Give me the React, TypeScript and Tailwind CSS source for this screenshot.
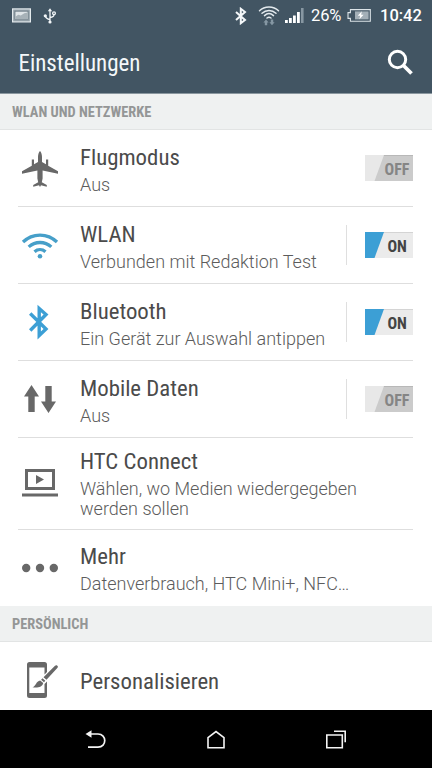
import type { ReactNode } from 'react';

type RowProps = {
  icon: ReactNode;
  title: string;
  lines?: string[];
  toggle?: 'on' | 'off';
  separated?: boolean;
  className?: string;
  textClassName?: string;
};

const condensed = "font-['Roboto_Condensed',Roboto,sans-serif] font-stretch-75%";

function StatusBar() {
  return (
    <div className="flex h-[31px] shrink-0 items-center text-white">
      <svg className="ml-3 h-[15px] w-[19px]" viewBox="0 0 19 15">
        <rect x="0.6" y="0.9" width="17.8" height="13" fill="#93a0a8" stroke="#e4eaed" strokeWidth="1.2" />
        <rect x="3" y="3.2" width="13" height="8.4" fill="#dfe5e8" stroke="#62727c" strokeWidth="0.7" />
        <path d="M3.3 11.3V8.8l3-2 2.5.8 3.5-2.4 3.4-.8v6.9z" fill="#a7b2b8" />
      </svg>
      <svg className="ml-3 h-4 w-[14px]" viewBox="0 0 14 16" fill="none" stroke="#f2f6f8" strokeWidth="1.3">
        <path d="M7 2.5V14M2.5 8.2c.3 2.4 1.5 2.9 4.5 3.3M11 6.6c0 2-1 2.7-4 3" />
        <path d="M4.8 3.2 7 .2l2.2 3z" fill="#f2f6f8" stroke="none" />
        <circle cx="2.3" cy="7.8" r="1.6" fill="#f2f6f8" stroke="none" />
        <circle cx="11" cy="5.2" r="1.4" />
        <circle cx="7" cy="14" r="1.6" fill="#f2f6f8" stroke="none" />
      </svg>
      <svg className="ml-[178px] h-[18px] w-[12px]" viewBox="0 0 12 18" fill="none" stroke="#f5f8fa" strokeWidth="2">
        <path d="M1 5l9 8-4.200 3.200V1.800L10 5l-9 8" />
      </svg>
      <svg className="ml-[11px] h-5 w-[22px]" viewBox="0 0 22 20" fill="none" stroke="#e3eaee" strokeWidth="1.5" strokeLinecap="round">
        <path d="M1.500 4.700c5-5 14-5 19 0M4 7.200c4-3.700 10-3.700 14 0M6.500 9.600c2.800-2.500 6.200-2.500 9 0M9 12c1.300-.9 2.700-.9 4 0" />
        <path d="m8 13.600 2.600 2.900H9.200v2.700H6.800v-2.700H5.400zM14 19.200l-2.600-2.900h1.400v-2.700h2.400v2.700h1.400z" fill="#8597a3" stroke="none" />
      </svg>
      <svg className="ml-[5px] h-[15px] w-[19px]" viewBox="0 0 19 15" fill="#ffffff">
        <path d="M0 12h2.800v3H0zM4 10h2.800v5H4zM8 7.500h2.800V15H8zM12 4h2.800v11H12z" />
        <path d="M16 0h2.600v15H16z" fill="#8797a2" />
      </svg>
      <span className="ml-[7px] w-[31px] whitespace-nowrap font-[Roboto,sans-serif] text-[16.5px] leading-5 tracking-[-0.1px]">26%</span>
      <svg className="ml-[5px] h-[13px] w-[24px]" viewBox="0 0 24 13">
        <path d="M3.400.6h19.900v11.600H3.400V9.400H1V3.600h2.400z" fill="none" stroke="#dce4e8" strokeWidth="1.1" />
        <path d="M8 2.400h13.600v8H8z" fill="#a3afb7" />
        <path d="M14.800 2.300 10.800 6.800h2.400l-.8 3.500 4.200-4.500h-2.400z" fill="#fff" />
      </svg>
      <span className="ml-[9px] whitespace-nowrap font-[Roboto,sans-serif] text-[16.5px] font-medium leading-5">10:42</span>
    </div>
  );
}

function SectionHeader({ label }: { label: string }) {
  return (
    <div className="flex h-9 shrink-0 items-center border-b border-[#e2e4e4] bg-[#eff1f1] pl-3 pt-[3px]">
      <h2 className={`${condensed} whitespace-nowrap text-[14.4px] font-bold leading-5 text-[#949696]`}>{label}</h2>
    </div>
  );
}

function Toggle({ state }: { state: 'on' | 'off' }) {
  const on = state === 'on';
  return (
    <div className={`relative flex h-[26px] w-12 items-center justify-end border-t ${on ? 'border-[#d4d4d4] bg-[#ebebeb] pr-[6.5px]' : 'border-[#b8b8b8] bg-[#cbcbcb] pr-1'}`}>
      <svg className="absolute -top-px left-0 h-[26px] w-5" viewBox="0 0 20 26">
        <path d="M0 0h19L9.500 26H0z" fill={on ? '#3c9fd5' : '#e8e8e8'} />
      </svg>
      <span className={`${condensed} relative pt-0.5 text-[16px] font-bold leading-5 ${on ? 'text-[#444444]' : 'text-[#858585]'}`}>{on ? 'ON' : 'OFF'}</span>
    </div>
  );
}

function SettingsRow({ icon, title, lines = [], toggle, separated, className = 'h-[77px] border-b border-[#dedede]', textClassName = 'pt-[14px]' }: RowProps) {
  return (
    <div className={`ml-[18px] mr-[18.6px] flex shrink-0 ${className}`}>
      <div className="flex w-[62px] shrink-0 items-center">{icon}</div>
      <div className={`min-w-0 flex-1 whitespace-nowrap ${textClassName}`}>
        <h3 className={`${condensed} mb-[3px] text-[22.8px] leading-7 text-[#4b4b4b]`}>{title}</h3>
        {lines.map((line) => (
          <p key={line} className="font-[Roboto,sans-serif] text-[18px] font-light leading-5 text-[#5c5c5c]">{line}</p>
        ))}
      </div>
      {toggle && (
        <div className="flex items-center">
          {separated && <div className="mr-[18px] h-10 w-px bg-[#dfdfdf]" />}
          <Toggle state={toggle} />
        </div>
      )}
    </div>
  );
}

const airplane = (
  <svg className="mt-px ml-[3px] h-[38px] w-[38px]" viewBox="0 0 38 38" fill="#686868">
    <path d="M19 1c1.200 1.200 2 3.400 2 6v5l4 2.300V9.500h2.200v6.300l9.800 5.400v2.500L21.600 20.500v8l-.8 3.800 5 2.800v1.700L20 35.200 19 37l-1-1.800-5.800 1.600v-1.700l5-2.800-.8-3.800v-8L1 23.700v-2.500l9.800-5.400V9.500H13v4.800l4-2.300V7c0-2.600.8-4.800 2-6z" />
  </svg>
);

const wifi = (
  <svg className="ml-[3px] h-[28px] w-[38px]" viewBox="0 0 38 28" fill="none" stroke="#469fc9" strokeWidth="3.3">
    <path d="M2 11c9.500-9.300 24.500-9.300 34 0M7.700 15.900c6.500-5.900 16.100-5.900 22.600 0M13.500 20.700c3.200-2.700 7.800-2.700 11 0" />
    <circle cx="19" cy="25.300" r="2.300" fill="#469fc9" stroke="none" />
  </svg>
);

const bluetooth = (
  <svg className="ml-[11px] h-[36px] w-[20px]" viewBox="0 0 20 36" fill="none" stroke="#3c9fd5" strokeWidth="3.4">
    <path d="M1.200 9.500 17 25l-6.800 6.500V4.500L17 10.500 1.200 26.500" />
  </svg>
);

const arrows = (
  <svg className="ml-[6px] h-[30px] w-[33px]" viewBox="0 0 33 30" fill="#686868">
    <path d="M7.500 1 15 12.500h-4.300V28H4.300V12.500H0zM21.300 2h6.400v15.500H32L24.500 29 17 17.500h4.300z" />
  </svg>
);

const laptop = (
  <svg className="mb-[2px] ml-1 h-[28px] w-[36px]" viewBox="0 0 36 28" fill="#686868">
    <path d="M3 0h30v21H3zM6 3v15h24V3z" fillRule="evenodd" />
    <path d="M14 6v9l8-4.500zM0 24.500h36v3H0z" />
  </svg>
);

const dots = (
  <svg className="mb-px ml-1 h-[10px] w-[36px]" viewBox="0 0 36 10" fill="#686868">
    <circle cx="4.200" cy="5" r="4.200" />
    <circle cx="18" cy="5" r="4.200" />
    <circle cx="31.800" cy="5" r="4.200" />
  </svg>
);

const personalize = (
  <svg className="mt-2 ml-[9px] h-[37px] w-[32px]" viewBox="0 0 32 37" fill="#686868">
    <path d="M2.500 0h15A2.500 2.500 0 0 1 20 2.500V10l-2.500 2.500V5.500H2.300v25.500H17.500V22l2.500-2.500v14a2.500 2.500 0 0 1-2.500 2.500h-15A2.500 2.500 0 0 1 0 33.500v-31A2.500 2.500 0 0 1 2.500 0z" />
    <path d="M29.800 3.200c1.300.8 1.500 1.800.5 2.900L19.500 17.800l-3-2.600L28 3.800c.6-.6 1.200-.8 1.800-.6zM15.500 16.300l2.800 2.500-1.300 1.400-2.900-2.400zM13.200 18.400l3 2.600c-.5 3.800-5.500 5.300-10.700 4.300 3.700-1.400 3.400-6.200 7.700-6.900z" />
  </svg>
);

function NavBar() {
  return (
    <div className="flex h-[58px] shrink-0 items-center bg-black px-9 pt-px">
      <div className="flex flex-1 justify-center">
        <svg className="h-5 w-[22px]" viewBox="0 0 22 20" fill="none" stroke="#f4f4f4" strokeWidth="1.7">
          <path d="M4.500 4H13c9 0 9 13.200 0 13.200H3" />
          <path d="M.5 4l6-3.700v7.400z" fill="#f4f4f4" stroke="none" />
        </svg>
      </div>
      <div className="flex flex-1 justify-center">
        <svg className="h-5 w-5" viewBox="0 0 20 20" fill="none" stroke="#f4f4f4" strokeWidth="1.6">
          <path d="M2 17.700V7.700L10 1.500l8 6.200v10z" />
        </svg>
      </div>
      <div className="flex flex-1 justify-center">
        <svg className="h-5 w-[22px]" viewBox="0 0 22 20" fill="none" stroke="#f4f4f4" strokeWidth="1.6">
          <path d="M1.800 5h15.500v12.700H1.800zM9 1.300h11.200v11" />
        </svg>
      </div>
    </div>
  );
}

export default function App() {
  return (
    <div className="flex h-[768px] w-[432px] flex-col overflow-hidden bg-white">
      <header className="flex h-[94px] shrink-0 flex-col border-b border-[#8a979f] bg-[#425563]">
        <StatusBar />
        <div className="flex flex-1 items-center justify-between pl-[18.5px] pr-[19px] pt-[3px]">
          <h1 className={`${condensed} text-[23px] leading-8 text-[#f4f8fa]`}>Einstellungen</h1>
          <svg className="mb-1 h-[26px] w-[26px]" viewBox="0 0 26 26" fill="none" stroke="#ffffff">
            <circle cx="10.500" cy="10.500" r="8.200" strokeWidth="3" />
            <path d="m16.500 16.500 8 8" strokeWidth="3.8" />
          </svg>
        </div>
      </header>

      <SectionHeader label="WLAN UND NETZWERKE" />
      <main className="flex flex-1 flex-col overflow-hidden">
        <SettingsRow icon={airplane} title="Flugmodus" lines={['Aus']} toggle="off" />
        <SettingsRow icon={wifi} title="WLAN" lines={['Verbunden mit Redaktion Test']} toggle="on" separated />
        <SettingsRow icon={bluetooth} title="Bluetooth" lines={['Ein Gerät zur Auswahl antippen']} toggle="on" separated />
        <SettingsRow icon={arrows} title="Mobile Daten" lines={['Aus']} toggle="off" separated />
        <SettingsRow
          icon={laptop}
          title="HTC Connect"
          lines={['Wählen, wo Medien wiedergegeben', 'werden sollen']}
          className="h-[92px] border-b border-[#dedede]"
          textClassName="pt-[10px]"
        />
        <SettingsRow icon={dots} title="Mehr" lines={['Datenverbrauch, HTC Mini+, NFC…']} className="h-[76px]" textClassName="pt-[13px]" />
        <SectionHeader label="PERSÖNLICH" />
        <SettingsRow icon={personalize} title="Personalisieren" className="h-[69px]" textClassName="pt-[26px]" />
      </main>
      <NavBar />
    </div>
  );
}
